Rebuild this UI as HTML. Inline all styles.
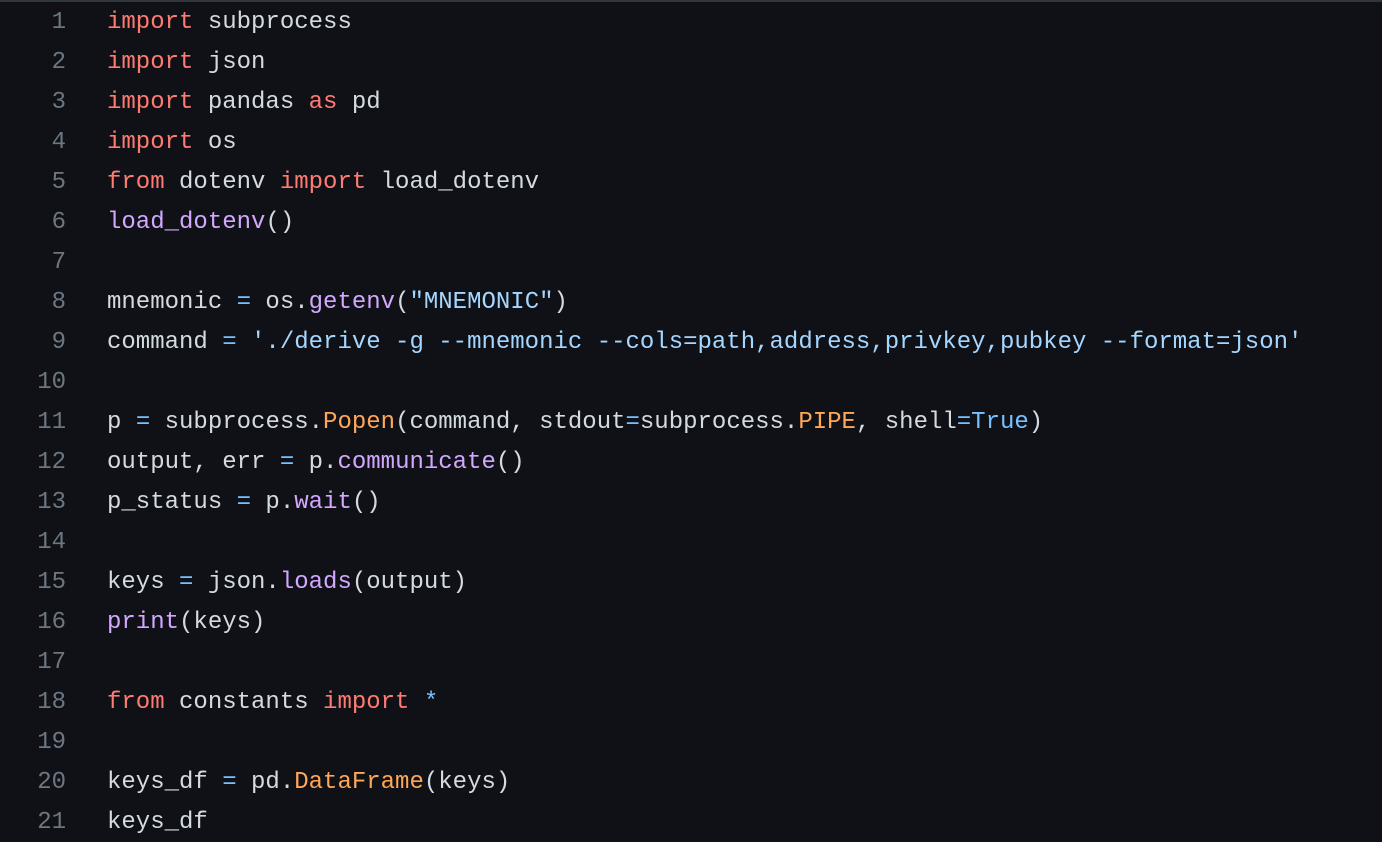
<!DOCTYPE html>
<html><head><meta charset="utf-8"><style>
html,body{margin:0;padding:0;background:#0f1116;width:1382px;height:842px;overflow:hidden}
.top{height:2px;background:#30363d}
.wrap{font-family:"Liberation Mono",monospace;font-size:24px;line-height:40px;color:#d4dae1;position:relative;top:1px}
.l{height:40px;white-space:pre;position:relative}
.n{position:absolute;right:1316px;color:#6e7681;text-align:right}
.c{position:absolute;left:107px}
.k{color:#ff7b72}.f{color:#d2a8ff}.s{color:#a5d6ff}.v{color:#79c0ff}.o{color:#ffa657}
</style></head><body><div class="top"></div><div class="wrap">
<div class="l"><span class="n">1</span><span class="c"><span class="k">import</span> subprocess</span></div>
<div class="l"><span class="n">2</span><span class="c"><span class="k">import</span> json</span></div>
<div class="l"><span class="n">3</span><span class="c"><span class="k">import</span> pandas <span class="k">as</span> pd</span></div>
<div class="l"><span class="n">4</span><span class="c"><span class="k">import</span> os</span></div>
<div class="l"><span class="n">5</span><span class="c"><span class="k">from</span> dotenv <span class="k">import</span> load_dotenv</span></div>
<div class="l"><span class="n">6</span><span class="c"><span class="f">load_dotenv</span>()</span></div>
<div class="l"><span class="n">7</span><span class="c"></span></div>
<div class="l"><span class="n">8</span><span class="c">mnemonic <span class="v">=</span> os.<span class="f">getenv</span>(<span class="s">"MNEMONIC"</span>)</span></div>
<div class="l"><span class="n">9</span><span class="c">command <span class="v">=</span> <span class="s">'./derive -g --mnemonic --cols=path,address,privkey,pubkey --format=json'</span></span></div>
<div class="l"><span class="n">10</span><span class="c"></span></div>
<div class="l"><span class="n">11</span><span class="c">p <span class="v">=</span> subprocess.<span class="o">Popen</span>(command, stdout<span class="v">=</span>subprocess.<span class="o">PIPE</span>, shell<span class="v">=True</span>)</span></div>
<div class="l"><span class="n">12</span><span class="c">output, err <span class="v">=</span> p.<span class="f">communicate</span>()</span></div>
<div class="l"><span class="n">13</span><span class="c">p_status <span class="v">=</span> p.<span class="f">wait</span>()</span></div>
<div class="l"><span class="n">14</span><span class="c"></span></div>
<div class="l"><span class="n">15</span><span class="c">keys <span class="v">=</span> json.<span class="f">loads</span>(output)</span></div>
<div class="l"><span class="n">16</span><span class="c"><span class="f">print</span>(keys)</span></div>
<div class="l"><span class="n">17</span><span class="c"></span></div>
<div class="l"><span class="n">18</span><span class="c"><span class="k">from</span> constants <span class="k">import</span> <span class="v">*</span></span></div>
<div class="l"><span class="n">19</span><span class="c"></span></div>
<div class="l"><span class="n">20</span><span class="c">keys_df <span class="v">=</span> pd.<span class="o">DataFrame</span>(keys)</span></div>
<div class="l"><span class="n">21</span><span class="c">keys_df</span></div>
</div></body></html>
